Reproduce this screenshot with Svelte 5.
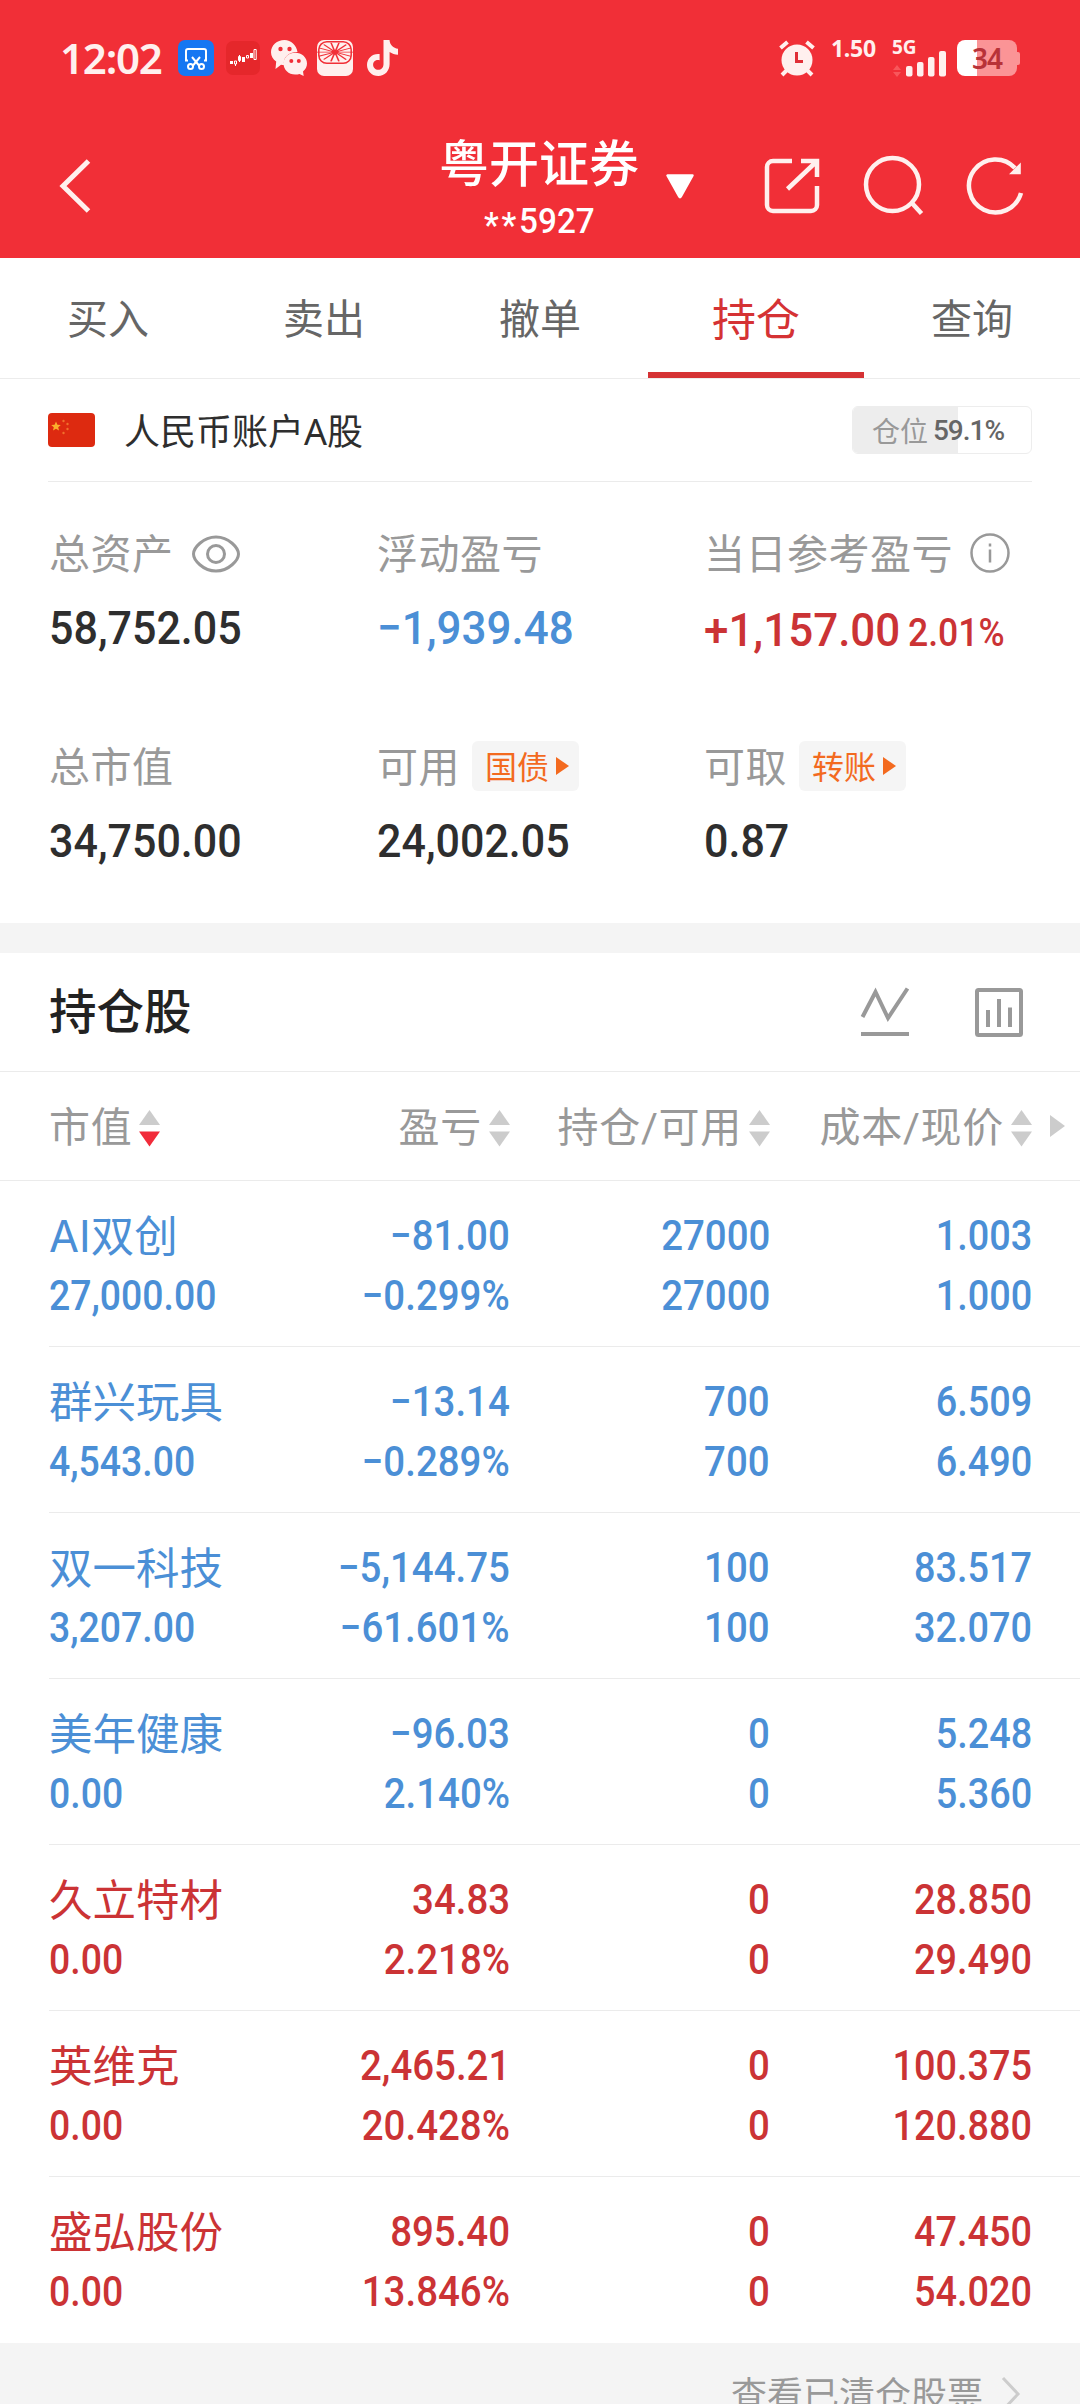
<script>
  const tabs = ['买入', '卖出', '撤单', '持仓', '查询'];
  const activeTab = '持仓';

  const position = 59.1;

  const columns = [
    { label: '市值', sorted: true },
    { label: '盈亏' },
    { label: '持仓/可用' },
    { label: '成本/现价' }
  ];

  const holdings = [
    { name: 'AI双创', value: '27,000.00', profit: '−81.00', rate: '−0.299%', held: '27000', usable: '27000', cost: '1.003', price: '1.000', dir: 'down' },
    { name: '群兴玩具', value: '4,543.00', profit: '−13.14', rate: '−0.289%', held: '700', usable: '700', cost: '6.509', price: '6.490', dir: 'down' },
    { name: '双一科技', value: '3,207.00', profit: '−5,144.75', rate: '−61.601%', held: '100', usable: '100', cost: '83.517', price: '32.070', dir: 'down' },
    { name: '美年健康', value: '0.00', profit: '−96.03', rate: '2.140%', held: '0', usable: '0', cost: '5.248', price: '5.360', dir: 'down' },
    { name: '久立特材', value: '0.00', profit: '34.83', rate: '2.218%', held: '0', usable: '0', cost: '28.850', price: '29.490', dir: 'up' },
    { name: '英维克', value: '0.00', profit: '2,465.21', rate: '20.428%', held: '0', usable: '0', cost: '100.375', price: '120.880', dir: 'up' },
    { name: '盛弘股份', value: '0.00', profit: '895.40', rate: '13.846%', held: '0', usable: '0', cost: '47.450', price: '54.020', dir: 'up' }
  ];

  // spokes between the petals of the fan-shaped app icon
  const spokes = Array.from({ length: 14 }, (_, i) => (i * 360) / 14 + 13);
</script>

<div class="screen">
  <header>
    <div class="status">
      <div class="status-left">
        <span class="clock">12:02</span>
        <svg class="app-icon" width="36" height="36" viewBox="0 0 36 36">
          <rect width="36" height="36" rx="7" fill="#1677f2" />
          <g fill="none" stroke="#fff" stroke-width="2">
            <path d="M10 20.500H8V11a2 2 0 0 1 2-2h16a2 2 0 0 1 2 2v9.500H26" />
            <path d="M14 17l7 8.500M22 17l-7 8.500" />
            <circle cx="12.500" cy="26.500" r="2.500" />
            <circle cx="23.500" cy="26.500" r="2.500" />
          </g>
        </svg>
        <svg class="app-icon stock" width="34" height="34" viewBox="0 0 34 34">
          <rect width="34" height="34" rx="7" fill="#e5272b" />
          <g fill="#fff">
            <rect x="4" y="20" width="3" height="3" />
            <rect x="16" y="16" width="3" height="5" />
            <rect x="24" y="12" width="3" height="5" />
          </g>
          <g fill="none" stroke="#fff" stroke-width="1">
            <path d="M8.500 20h2v3h-2zM9.500 23v2M12.500 15.500h2v4h-2zM13.500 14v7M20.500 14.500h2v2.500h-2zM28 8.500h2.200v10H28z" />
          </g>
        </svg>
        <svg class="app-icon wechat" width="36" height="36" viewBox="0 0 36 36">
          <path fill="#fff0ee" d="M13.500 0C6 0 0 5.400 0 12.200c0 4 2 7.200 5.200 9.400L4.500 29l5.500-4.300c1 .200 2.100.300 3.200.300C11.500 18 17 12 26.500 12 25.500 5 20 0 13.500 0z" />
          <path fill="#fff0ee" d="M24.200 12.800c-6.600 0-11.700 4.600-11.700 10.800s5 11 11.700 11c1.600 0 3-.300 4.300-.700l4.200 2-.700-4.300c2.500-2 4-4.800 4-8 0-6.200-5.200-10.800-11.800-10.800z" />
          <g fill="#f12f37">
            <circle cx="9.500" cy="9" r="2.200" />
            <circle cx="18.500" cy="9" r="2.200" />
            <circle cx="20.300" cy="21" r="2" />
            <circle cx="27.800" cy="21" r="2" />
          </g>
        </svg>
        <svg class="app-icon fan" width="36" height="36" viewBox="0 0 36 36">
          <rect width="36" height="36" rx="7" fill="#fff0ee" />
          <rect x="1.800" y="1.800" width="32.400" height="21.500" rx="8" fill="none" stroke="#f12f37" stroke-width="1.500" />
          <g stroke="#f12f37" stroke-width="1.100">
            {#each spokes as angle}
              <path d="M18 12V0" transform="translate(-9 2.500) scale(1.500 .8) rotate({angle} 18 12)" />
            {/each}
          </g>
          <path d="M18 15l-4-3 1.500-2 2.500 1 2.500-1 1.500 2z" fill="#f12f37" />
        </svg>
        <svg class="app-icon note" width="32" height="36" viewBox="0 0 32 36">
          <path fill="#fff0ee" d="M16.500 0h6c.400 5 3.800 8.300 8.500 8.700v6c-3.200 0-6-1-8.400-2.600V24c0 7-5 12-11.300 12C5 36 0 31 0 24.900c0-6.600 5.500-11.700 12.600-10.900v6.300c-3.600-.900-6.500 1.300-6.500 4.500 0 2.900 2.300 5 5.100 5 3 0 5.300-2.200 5.300-5.900z" />
        </svg>
      </div>
      <div class="status-right">
        <svg width="36" height="37" viewBox="0 0 36 37">
          <g stroke="#fff0ee" stroke-width="4" fill="none">
            <path d="M1.500 8l7-6M34.500 8l-7-6M8 30l-5 5M28 30l5 5" />
          </g>
          <circle cx="18" cy="20" r="15.500" fill="#fff0ee" />
          <path d="M17.500 12v9.500H24" fill="none" stroke="#e02f37" stroke-width="3" />
        </svg>
        <span class="rate">1.50</span>
        <div class="signal">
          <span>5G</span>
          <svg width="55" height="37" viewBox="0 0 55 37">
            <path d="M1 30l4-5 4 5zM1 32l4 5 4-5z" fill="#f8575b" />
            <g fill="#fff0ee">
              <rect x="14" y="26" width="6.500" height="10.500" rx="2" />
              <rect x="25" y="22" width="6.500" height="14.500" rx="2" />
              <rect x="36" y="17" width="6.500" height="19.500" rx="2" />
              <rect x="47" y="11" width="7" height="25.500" rx="2" />
            </g>
          </svg>
        </div>
        <div class="battery"><span>34</span></div>
      </div>
    </div>

    <div class="navbar">
      <svg class="back" width="34" height="56" viewBox="0 0 34 56">
        <path d="M30.500 3L5 28l25.500 25" fill="none" stroke="#fff0ee" stroke-width="5" />
      </svg>
      <div class="account">
        <div class="broker">
          <strong>粤开证券</strong>
          <span><span class="stars">**</span>5927</span>
        </div>
        <svg width="30" height="25" viewBox="0 0 30 25">
          <path d="M2.500 1.500h25L15.800 22.500q-.800 1.400-1.600 0z" fill="#fff" stroke="#fff" stroke-width="2.500" stroke-linejoin="round" />
        </svg>
      </div>
      <div class="actions" aria-label="操作">
        <svg width="60" height="60" viewBox="0 0 60 60" fill="none" stroke="#fff0ee" stroke-width="4.500">
          <path d="M30 6H11a6 6 0 0 0-6 6v38a6 6 0 0 0 6 6h38a6 6 0 0 0 6-6V31M39 6h16v16M54 7L25.500 34" />
        </svg>
        <svg width="62" height="62" viewBox="0 0 62 62" fill="none" stroke="#fff0ee" stroke-width="4.500">
          <circle cx="30.500" cy="29.500" r="26.500" />
          <path d="M49 47l10.500 11.500" />
        </svg>
        <svg width="60" height="62" viewBox="0 0 60 62" fill="none" stroke="#fff0ee" stroke-width="4.500">
          <path d="M57 38A26.500 26.500 0 1 1 51 13" />
          <path d="M56.800 7.500v11.800H45z" fill="#fff0ee" stroke="none" />
        </svg>
      </div>
    </div>
  </header>

  <nav>
    {#each tabs as tab}
      <span class:active={tab === activeTab}>{tab}</span>
    {/each}
  </nav>

  <section class="summary">
    <div class="currency">
      <svg width="47" height="34" viewBox="0 0 47 34">
        <rect width="47" height="34" rx="4" fill="#dd2a10" />
        <path d="M8 8.500l1.400 3.200 3.400.300-2.600 2.200.800 3.400-3-1.800-3 1.800.800-3.400-2.600-2.200 3.400-.300z" fill="#fbb02c" />
        <g fill="#f0702c">
          <circle cx="15.500" cy="8" r="1.200" />
          <circle cx="19.500" cy="11" r="1.200" />
          <circle cx="19.500" cy="16" r="1.200" />
          <circle cx="15.500" cy="20" r="1.200" />
        </g>
      </svg>
      <span class="currency-name">人民币账户A股</span>
      <div class="position">
        <i style="width: {position}%"></i>
        <span>仓位</span><b>{position}%</b>
      </div>
    </div>

    <div class="stats">
      <div class="stat">
        <div class="label">
          <span>总资产</span>
          <svg class="eye" width="48" height="38" viewBox="0 0 48 38" fill="none" stroke="#999" stroke-width="3">
            <path d="M1.500 19C1.500 13 11 2 24 2s22.500 11 22.500 17S37 36 24 36 1.500 25 1.500 19z" />
            <circle cx="24" cy="19" r="8.500" />
          </svg>
        </div>
        <div class="figure"><span class="num">58,752.05</span></div>
      </div>
      <div class="stat">
        <div class="label"><span>浮动盈亏</span></div>
        <div class="figure down"><span class="num signed">−1,939.48</span></div>
      </div>
      <div class="stat">
        <div class="label">
          <span>当日参考盈亏</span>
          <svg class="info" width="40" height="40" viewBox="0 0 40 40" fill="none" stroke="#999" stroke-width="2.500">
            <circle cx="20" cy="20" r="18.500" />
            <path d="M20 16.500v13M20 10.500v3" />
          </svg>
        </div>
        <div class="figure today up"><span class="num signed">+1,157.00</span><small class="num signed">2.01%</small></div>
      </div>
      <div class="stat">
        <div class="label"><span>总市值</span></div>
        <div class="figure"><span class="num">34,750.00</span></div>
      </div>
      <div class="stat">
        <div class="label"><span>可用</span><div class="chip"><span>国债</span><i></i></div></div>
        <div class="figure"><span class="num">24,002.05</span></div>
      </div>
      <div class="stat">
        <div class="label"><span>可取</span><div class="chip"><span>转账</span><i></i></div></div>
        <div class="figure"><span class="num">0.87</span></div>
      </div>
    </div>
  </section>

  <section class="holdings">
    <div class="title">
      <h2>持仓股</h2>
      <svg width="50" height="50" viewBox="0 0 50 50" fill="none" stroke="#999" stroke-width="4">
        <path d="M2.500 30L15.500 5l12.500 26L47.500 1.500M1 47h48" />
      </svg>
      <svg width="48" height="49" viewBox="0 0 48 49" fill="none" stroke="#999" stroke-width="4">
        <rect x="2" y="2" width="44" height="45" rx="1.500" />
        <path d="M13 22v17M24 11v28M35 19.500V39" />
      </svg>
    </div>

    <div class="row head">
      {#each columns as col}
        <div class="cell">
          <span>{col.label}</span>
          <svg class="sort" width="21" height="37" viewBox="0 0 21 37">
            <path d="M0 15L10.500 0 21 15z" fill="#ccc" />
            <path d="M0 21.500h21L10.500 36.500z" fill={col.sorted ? '#f12b3a' : '#ccc'} />
          </svg>
        </div>
      {/each}
      <span class="more"></span>
    </div>

    {#each holdings as h}
      <div class="row {h.dir}">
        <div class="cell">
          <span class="name">{h.name}</span>
          <span class="num">{h.value}</span>
        </div>
        <div class="cell">
          <span class="num">{h.profit}</span>
          <span class="num">{h.rate}</span>
        </div>
        <div class="cell">
          <span class="num">{h.held}</span>
          <span class="num">{h.usable}</span>
        </div>
        <div class="cell">
          <span class="num">{h.cost}</span>
          <span class="num">{h.price}</span>
        </div>
      </div>
    {/each}
  </section>

  <footer>
    <span>查看已清仓股票</span>
    <svg width="20" height="36" viewBox="0 0 20 36">
      <path d="M2 2l15 16L2 34" fill="none" stroke="#ccc" stroke-width="3" />
    </svg>
  </footer>
</div>

<style>
  :global(body) {
    margin: 0;
    background: #f4f4f4;
  }

  .screen {
    width: 1080px;
    height: 2404px;
    overflow: hidden;
    background: #f4f4f4;
    color: #2e2e2e;
    font-family: Roboto, 'Noto Sans CJK SC', sans-serif;
  }

  svg {
    display: block;
    flex: none;
  }

  .num {
    display: inline-block;
    font-family: Roboto, sans-serif;
    font-weight: 500;
    transform: scaleX(0.915);
    transform-origin: left center;
  }

  .signed {
    transform: scaleX(0.935);
  }

  .up { color: #cb3335; }
  .down { color: #4b8fd6; }

  header {
    height: 258px;
    background: #f12f37;
    color: #fff;
  }

  .status {
    display: flex;
    justify-content: space-between;
    height: 76px;
    padding: 40px 63px 0 60px;
    box-sizing: border-box;
  }

  .status-left,
  .status-right {
    display: flex;
    align-items: flex-start;
  }

  .clock {
    width: 118px;
    font: 600 42px/35px 'Noto Sans', sans-serif;
    letter-spacing: -1.2px;
    color: #fff0ee;
  }

  .stock { margin: 1px 0 0 12px; }
  .wechat { margin-left: 11px; }
  .fan { margin-left: 10px; }
  .note { margin-left: 14px; }

  .rate {
    width: 45px;
    margin-left: 16px;
    font: 700 23px/16px 'Noto Sans', sans-serif;
    letter-spacing: -0.3px;
    color: #fff0ee;
  }

  .signal {
    position: relative;
    margin: 0 10px 0 16px;
  }

  .signal span {
    position: absolute;
    left: 0;
    top: 0;
    font: 700 19px/15px 'Noto Sans', sans-serif;
    color: #fff0ee;
  }

  .battery {
    position: relative;
    width: 60px;
    height: 36px;
    border-radius: 8px;
    background: linear-gradient(90deg, #fff 20px, #fb9496 20px);
    text-align: center;
  }

  .battery::after {
    content: '';
    position: absolute;
    right: -3px;
    top: 12px;
    width: 3px;
    height: 13px;
    border-radius: 0 2px 2px 0;
    background: #fb9496;
  }

  .battery span {
    display: block;
    font: 600 28px/36px 'Noto Sans', sans-serif;
    letter-spacing: -1px;
    color: #b83238;
  }

  .navbar {
    display: grid;
    grid-template-columns: 1fr auto 1fr;
    height: 182px;
    padding: 0 56px 0 58px;
  }

  .back {
    margin-top: 82px;
  }

  .account {
    display: flex;
    margin-left: 52px;
  }

  .broker {
    display: flex;
    flex-direction: column;
    align-items: center;
    width: 200px;
    padding-top: 59px;
  }

  .broker strong {
    font-size: 50px;
    font-weight: 500;
    line-height: 60px;
  }

  .broker > span {
    font-size: 35px;
    font-weight: 500;
    line-height: 54px;
    transform: scaleX(0.95);
  }

  .stars {
    letter-spacing: 3px;
    vertical-align: -4px;
    line-height: 1;
  }

  .account > svg {
    margin: 98px 0 0 26px;
  }

  .actions {
    display: flex;
    justify-content: flex-end;
    gap: 40px;
    padding-top: 79px;
  }

  nav {
    display: flex;
    height: 120px;
    border-bottom: 1px solid #ececec;
    background: #fff;
  }

  nav span {
    flex: 1;
    border-bottom: 6px solid transparent;
    text-align: center;
    font-size: 41px;
    line-height: 125px;
    height: 114px;
    color: #666;
  }

  nav .active {
    border-color: #d53234;
    font-size: 44px;
    line-height: 126px;
    color: #d53234;
  }

  .summary {
    height: 544px;
    background: #fff;
  }

  .currency {
    display: flex;
    align-items: center;
    height: 102px;
    margin: 0 48px;
    border-bottom: 1px solid #ebebeb;
  }

  .currency-name {
    margin-left: 29px;
    padding-bottom: 2px;
    font-family: 'Noto Sans', 'Noto Sans CJK SC', sans-serif;
    font-size: 36px;
    color: #2e2e2e;
  }

  .position {
    position: relative;
    display: flex;
    align-items: center;
    justify-content: center;
    gap: 5px;
    width: 170px;
    height: 46px;
    margin-left: auto;
    padding-right: 8px;
    border: 1px solid #ededed;
    border-radius: 6px;
    overflow: hidden;
    color: #999;
    font-size: 28px;
  }

  .position i {
    position: absolute;
    left: 0;
    top: 0;
    bottom: 0;
    background: #ededed;
  }

  .position span,
  .position b {
    position: relative;
  }

  .position b {
    font-weight: 500;
    color: #666;
    letter-spacing: -1px;
  }

  .stats {
    display: grid;
    grid-template-columns: 328px 327px 1fr;
    grid-auto-rows: 213px;
    padding: 40px 0 0 49px;
  }

  .label {
    display: flex;
    align-items: center;
    height: 64px;
    font-size: 41px;
    letter-spacing: 0.5px;
    color: #999;
    white-space: nowrap;
  }

  .label > span {
    padding-bottom: 6px;
  }

  .eye { margin-left: 18px; }
  .info { margin: 0 0 3px 17px; }

  .figure {
    font-size: 47px;
    line-height: 83px;
  }

  .today {
    display: flex;
    align-items: baseline;
    line-height: 88px;
  }

  .figure small {
    margin-left: -6px;
    font-size: 38px;
  }

  .chip {
    display: flex;
    align-items: center;
    gap: 7px;
    width: 94px;
    height: 50px;
    margin: 0 0 3px 12px;
    padding-left: 13px;
    border-radius: 6px;
    background: #f5f5f5;
    font-size: 32px;
    letter-spacing: 0;
    color: #f36a1f;
  }

  .chip span {
    padding-bottom: 2px;
  }

  .chip i {
    border-left: 13px solid #f36a1f;
    border-top: 9px solid transparent;
    border-bottom: 9px solid transparent;
  }

  .holdings {
    margin-top: 30px;
    background: #fff;
  }

  .title {
    display: flex;
    align-items: center;
    gap: 65px;
    height: 118px;
    padding: 0 57px 0 49px;
    border-bottom: 1px solid #ebebeb;
  }

  h2 {
    flex: 1;
    margin: 0;
    padding-bottom: 8px;
    font-size: 47.5px;
    font-weight: 500;
    color: #222;
  }

  .row {
    display: grid;
    grid-template-columns: 210px 251px 260px 262px;
    height: 165px;
    margin-left: 49px;
    border-bottom: 1px solid #ebebeb;
  }

  .row:last-child {
    border-bottom-color: #fff;
  }

  .cell {
    display: flex;
    flex-direction: column;
    align-items: flex-end;
    padding-top: 25px;
    font-size: 42px;
    line-height: 60px;
    white-space: nowrap;
  }

  .cell:first-child {
    align-items: flex-start;
  }

  .cell .num {
    transform-origin: right center;
  }

  .cell:first-child .num {
    transform: scaleX(0.89);
    transform-origin: left center;
  }

  .cell:last-child .num {
    transform: scaleX(0.9);
  }

  .name {
    font-family: Inter, 'Noto Sans CJK SC', sans-serif;
    font-size: 43.5px;
  }

  .head {
    position: relative;
    height: 108px;
    margin-left: 0;
    padding-left: 49px;
  }

  .head .cell {
    flex-direction: row;
    align-items: center;
    justify-content: flex-end;
    gap: 7px;
    padding: 4px 0 0;
    font-size: 41px;
    letter-spacing: 0.7px;
    color: #999;
  }

  .head .cell:first-child {
    justify-content: flex-start;
  }

  .more {
    position: absolute;
    left: 1050px;
    top: 43px;
    border-left: 15px solid #ccc;
    border-top: 11px solid transparent;
    border-bottom: 11px solid transparent;
  }

  footer {
    display: flex;
    align-items: center;
    justify-content: flex-end;
    gap: 18px;
    height: 102px;
    padding-right: 59px;
    font-size: 36px;
    color: #999;
  }

  footer span {
    padding-bottom: 4px;
  }
</style>
